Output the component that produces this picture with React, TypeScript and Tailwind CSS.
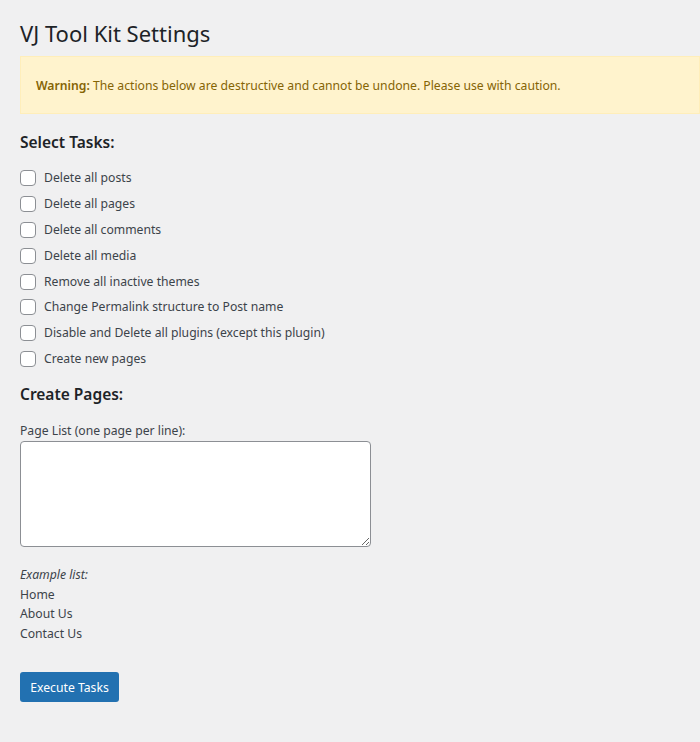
// WP admin settings page: VJ Tool Kit
const tasks = [
  "Delete all posts",
  "Delete all pages",
  "Delete all comments",
  "Delete all media",
  "Remove all inactive themes",
  "Change Permalink structure to Post name",
  "Disable and Delete all plugins (except this plugin)",
  "Create new pages",
];

function TaskRow({ label }: { label: string }) {
  return (
    <label className="flex h-[25.9px] items-center">
      <input
        type="checkbox"
        className="m-0 h-4 w-4 appearance-none rounded-[4px] border border-[#8c8f94] bg-white"
      />
      <span className="ml-[8px]">{label}</span>
    </label>
  );
}

export default function App() {
  return (
    <div
      className="min-h-[742px] bg-[#f0f0f1] pl-5 pt-[18px] text-[12.2px] leading-5 text-[#3c434a]"
      style={{ fontFamily: '"Noto Sans", "Open Sans", sans-serif' }}
    >
      <h1 className="text-[22px] font-normal leading-[30px] text-[#1d2327]">
        VJ Tool Kit Settings
      </h1>

      <div className="mt-2 border border-[#ffeeba] bg-[#fff3cd] px-[15px] pb-[17px] pt-[19px] text-[#856404]">
        <strong className="font-semibold">Warning:</strong> The actions below are
        destructive and cannot be undone. Please use with caution.
      </div>

      <h2 className="mt-[17px] text-[15.5px] font-semibold leading-[22px] text-[#1d2327]">
        Select Tasks:
      </h2>
      <div className="mt-3 flex flex-col">
        {tasks.map((t) => (
          <TaskRow key={t} label={t} />
        ))}
      </div>

      <h2 className="mt-[11px] text-[15.5px] font-semibold leading-[22px] text-[#1d2327]">
        Create Pages:
      </h2>
      <div className="mt-4">Page List (one page per line):</div>
      <textarea className="block h-[106px] w-[351px] rounded-[4px] border border-[#8c8f94] bg-white" />

      <div className="mt-[18px] leading-[19.5px]">
        <em>Example list:</em>
        <div>Home</div>
        <div>About Us</div>
        <div>Contact Us</div>
      </div>

      <button className="mt-[29px] h-[30px] w-[99px] rounded-[3px] bg-[#2271b1] pt-px text-[12.2px] text-white">
        Execute Tasks
      </button>
    </div>
  );
}
